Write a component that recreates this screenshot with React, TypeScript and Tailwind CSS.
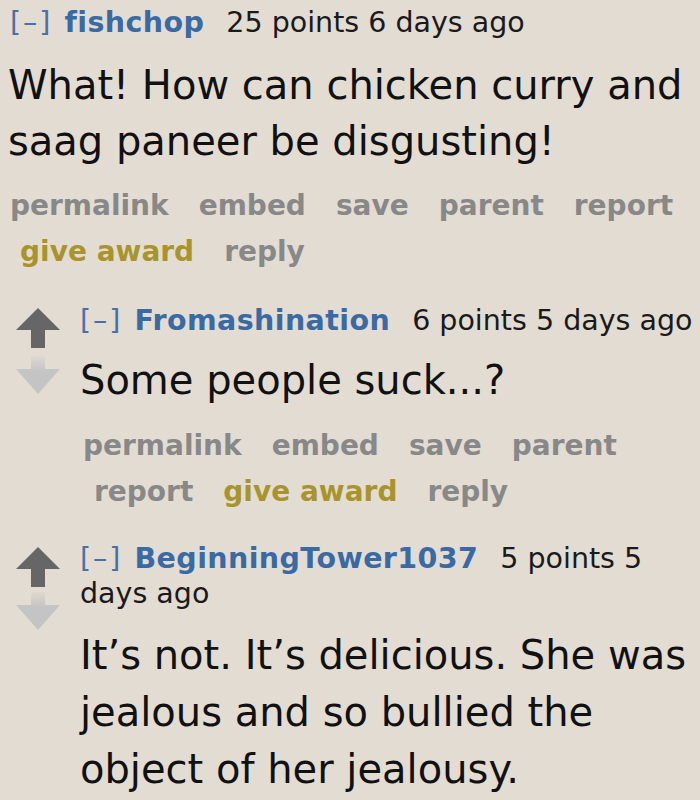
const font = { fontFamily: '"DejaVu Sans", Verdana, sans-serif' }

function UpArrow() {
  return (
    <svg width="44" height="40" viewBox="0 0 44 40">
      <path d="M22 0 L44 22 L29 22 L29 40 L15 40 L15 22 L0 22 Z" fill="#666666" />
    </svg>
  )
}

function DownArrow({ id }: { id: string }) {
  return (
    <svg width="44" height="38" viewBox="0 0 44 38">
      <defs>
        <linearGradient id={id} x1="0" y1="0" x2="0" y2="1">
          <stop offset="0" stopColor="#c4c4c4" stopOpacity="0.15" />
          <stop offset="0.4" stopColor="#c4c4c4" stopOpacity="1" />
        </linearGradient>
      </defs>
      <path d="M15 0 L29 0 L29 13 L44 13 L22 38 L0 13 L15 13 Z" fill={`url(#${id})`} />
    </svg>
  )
}

function Tagline({ user, meta }: { user: string; meta: string }) {
  const words = meta.split(' ')
  return (
    <div className="text-[28.5px] leading-[35px] text-[#1a1a1a]">
      <span className="tracking-[2px] text-[#4a70a8]">[–]</span>
      <span className="ml-[12px] font-bold tracking-[0.4px] text-[#3a6aa3]">{user}</span>
      <span className="ml-[22px]" />
      {words.map((w, i) => (
        <span key={i}>
          {w}
          {i < words.length - 1 ? ' ' : ''}
        </span>
      ))}
    </div>
  )
}

function Actions({ rows }: { rows: { pad: string; items: string[] }[] }) {
  return (
    <div className="text-[28px] font-bold leading-[46px] text-[#888888]">
      {rows.map((row, i) => (
        <div key={i} className={`flex gap-[30px] ${row.pad}`}>
          {row.items.map((it) => (
            <span key={it} className={it === 'give award' ? 'text-[#a8942c]' : ''}>
              {it}
            </span>
          ))}
        </div>
      ))}
    </div>
  )
}

export default function App() {
  return (
    <div className="w-[700px] h-[800px] overflow-hidden bg-[#e3dcd3]" style={font}>
      {/* top comment */}
      <div className="pl-[10px] pt-[5px]">
        <Tagline user="fishchop" meta="25 points 6 days ago" />
        <p className="mt-[17px] -ml-[2px] text-[40px] leading-[56px] text-[#111]">
          What! How can chicken curry and saag paneer be disgusting!
        </p>
        <div className="mt-[14px]">
          <Actions
            rows={[
              { pad: 'pl-0', items: ['permalink', 'embed', 'save', 'parent', 'report'] },
              { pad: 'pl-[10px]', items: ['give award', 'reply'] },
            ]}
          />
        </div>
      </div>

      {/* child 1 */}
      <div className="mt-[28px] flex">
        <div className="flex w-[80px] shrink-0 flex-col gap-[8px] pl-[16px] pt-[5px]">
          <UpArrow />
          <DownArrow id="d1" />
        </div>
        <div>
          <Tagline user="Fromashination" meta="6 points 5 days ago" />
          <p className="mt-[14px] text-[40px] leading-[56px] text-[#111]">Some people suck...?</p>
          <div className="mt-[15px]">
            <Actions
              rows={[
                { pad: 'pl-[3px]', items: ['permalink', 'embed', 'save', 'parent'] },
                { pad: 'pl-[14px]', items: ['report', 'give award', 'reply'] },
              ]}
            />
          </div>
        </div>
      </div>

      {/* child 2 */}
      <div className="mt-[26px] flex">
        <div className="flex w-[80px] shrink-0 flex-col gap-[5px] pl-[16px] pt-[6px]">
          <UpArrow />
          <DownArrow id="d2" />
        </div>
        <div className="pr-[4px]">
          <Tagline user="BeginningTower1037" meta="5 points 5 days ago" />
          <p className="mt-[16px] text-[40px] leading-[57px] text-[#111]">
            It’s not. It’s delicious. She was jealous and so bullied the object of her jealousy.
          </p>
        </div>
      </div>
    </div>
  )
}
